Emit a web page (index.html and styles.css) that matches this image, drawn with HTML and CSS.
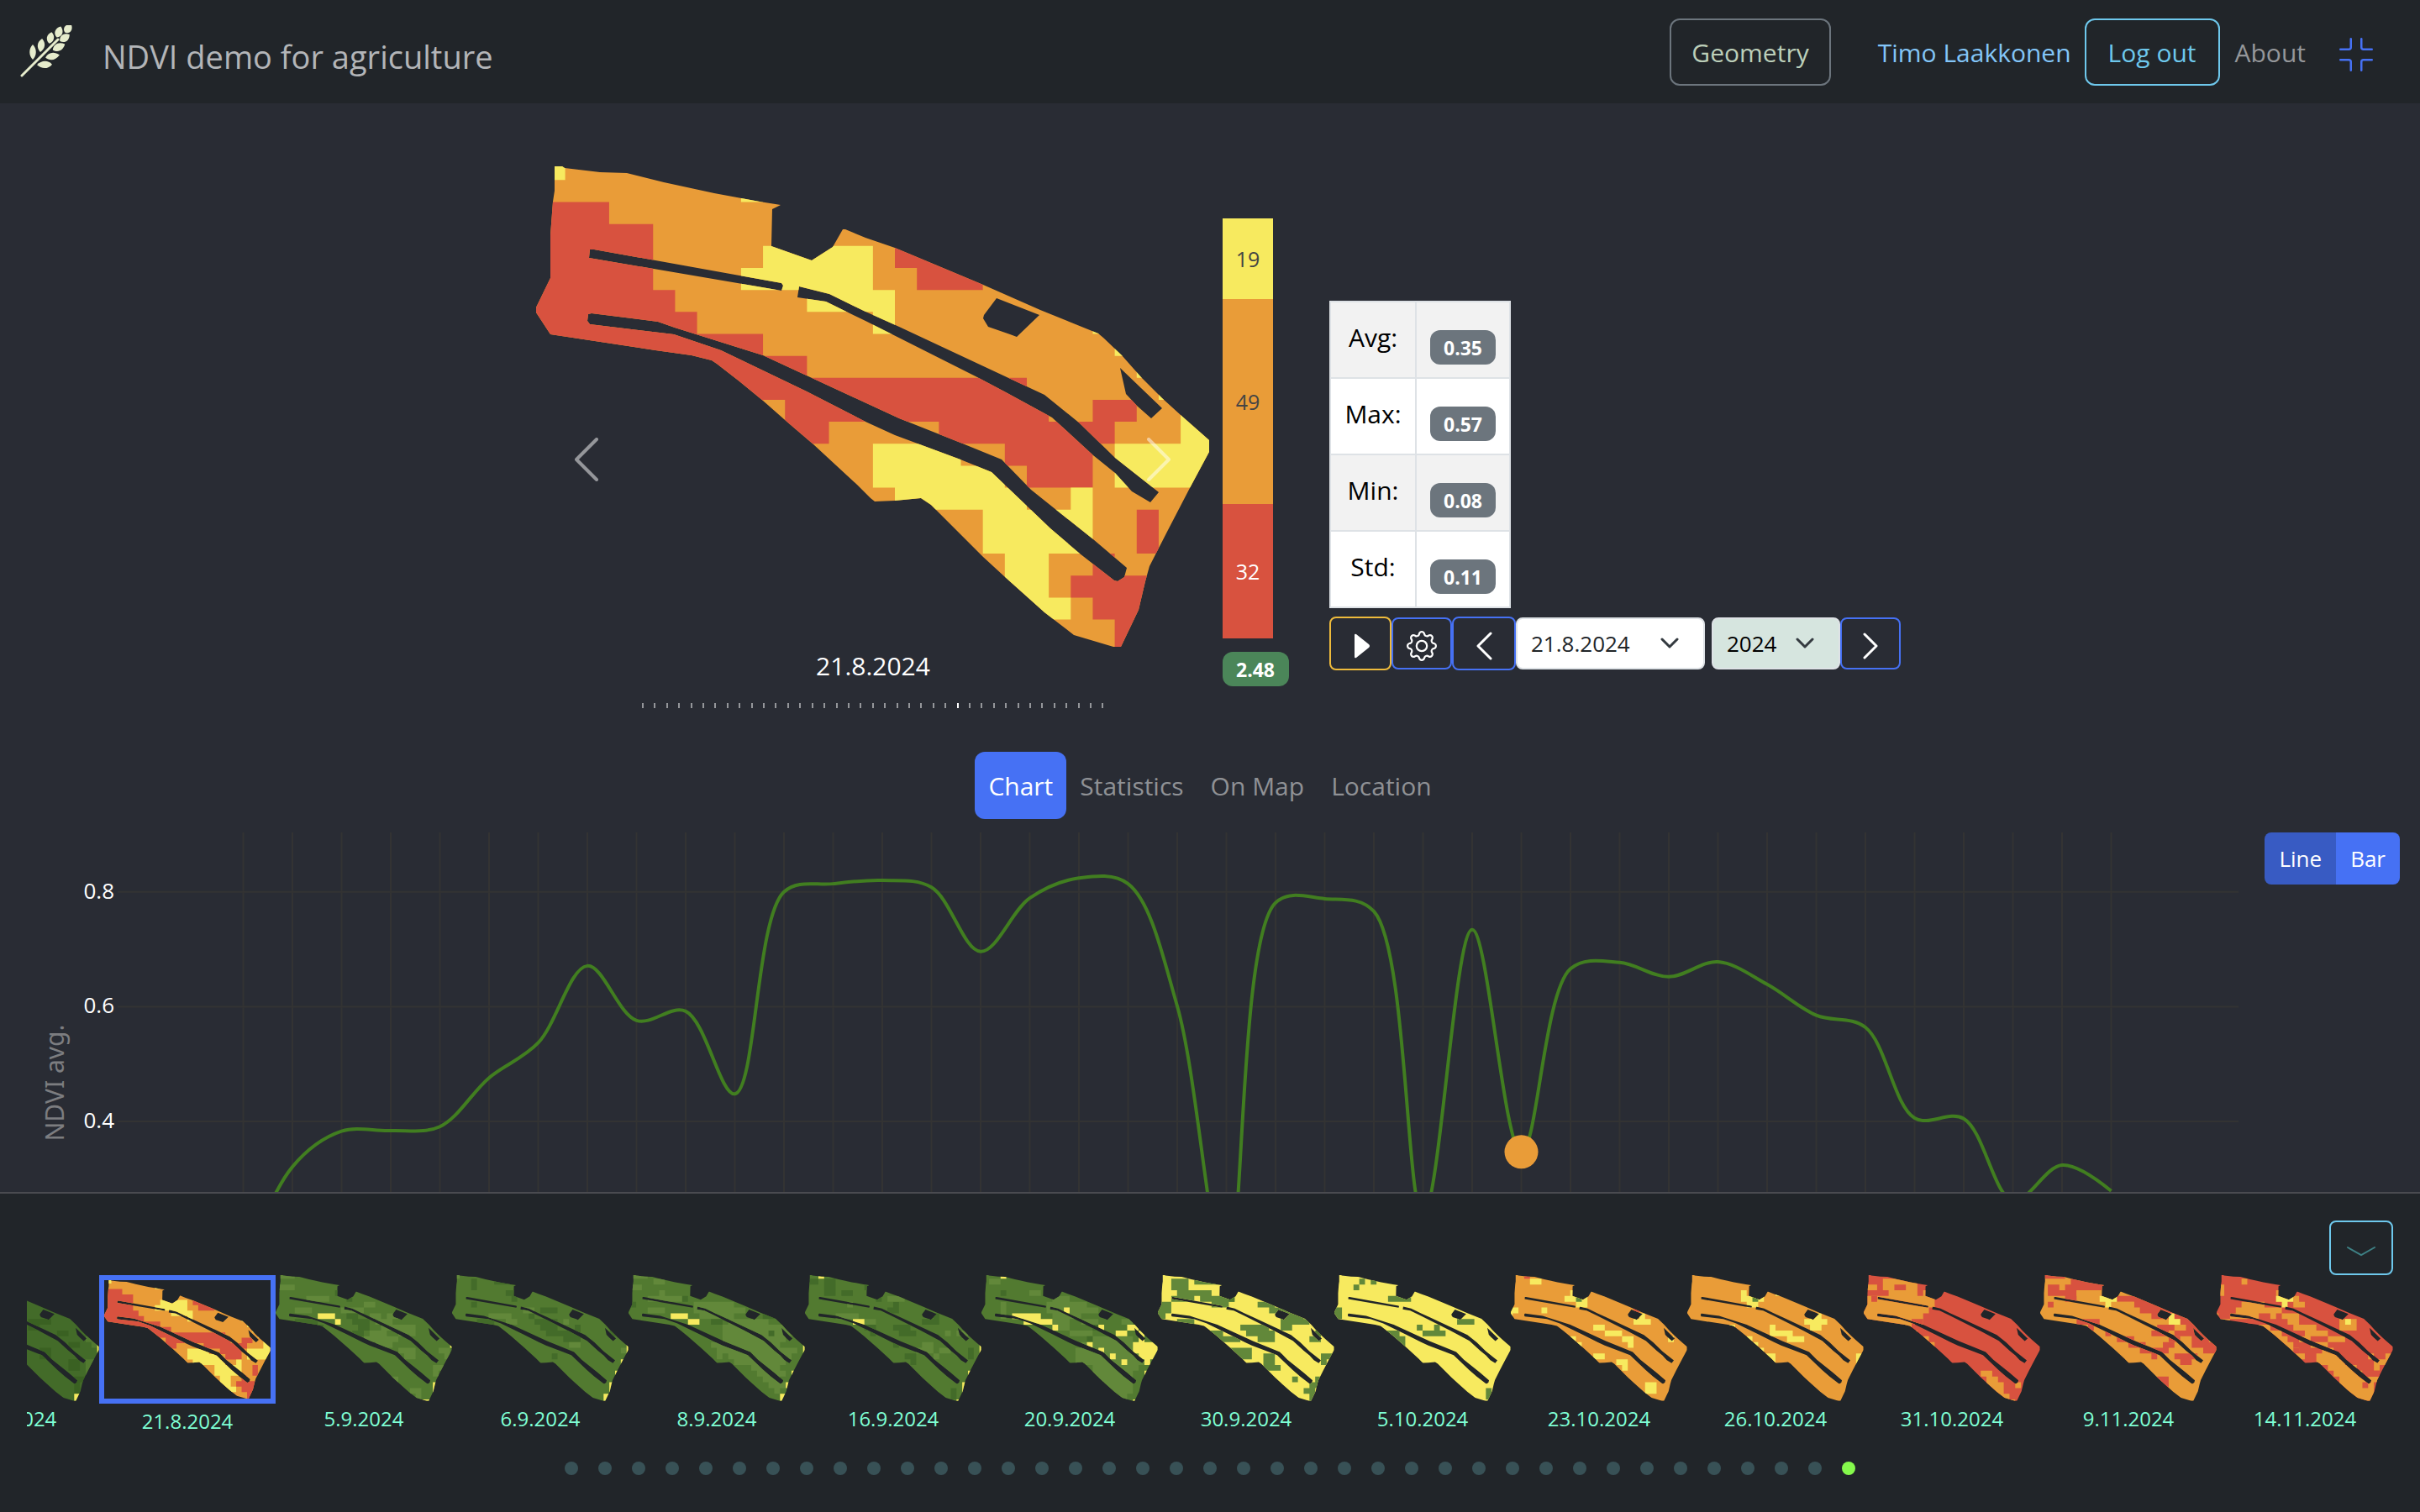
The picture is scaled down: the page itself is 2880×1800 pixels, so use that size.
FILE: index.html
```html
<!DOCTYPE html>
<html lang="en">
<head>
<meta charset="utf-8">
<title>NDVI demo for agriculture</title>
<meta name="viewport" content="width=device-width, initial-scale=1">
<link rel="stylesheet" href="styles.css">
</head>
<body>
<svg class="defs" aria-hidden="true">
  <defs>
    <!-- Outline of the field with the drains and holes left out -->
    <clipPath id="field-shape">
      <path clip-rule="evenodd" d="M660 198L669 198L672 200L714 205L746 206L790 217L850 230L904 240L929 244L919 249L918 293L966 310L991 294L1003 273L1006 273L1030 283L1065 295L1170 339L1238 369L1307 397L1313 402L1335 423L1358 449L1383 474L1405 494L1439 524L1439 538L1417 579L1390 631L1368 674L1363 692L1355 726L1334 770L1325 770L1278 756L1243 729L1195 686L1170 663L1108 601L1096 593L1065 596L1041 597L1036 593L1020 577L968 529L933 499L908 477L880 454L853 433L847 429L823 423L780 417L655 398L638 372L638 366L655 331L655 280L658 240L660 227Z
      M702 297L707 297L930 337L932 340L930 346L907 342L701 307Z
      M951 341L987 350L1030 371L1070 389L1243 470L1285 504L1327 545L1379 586L1369 598L1347 585L1327 563L1301 542L1252 497L1197 467L1163 449L1030 382L983 359L949 354Z
      M700 374L704 373L783 383L803 390L908 423L1070 498L1143 527L1192 547L1227 583L1301 642L1341 676L1338 687L1330 692L1326 691L1285 659L1250 629L1180 562L1143 547L1065 518L1030 502L960 466L858 417L802 398L702 386L699 382Z
      M1186 355L1237 375L1210 401L1202 398L1176 389L1170 379L1171 375Z
      M1333 438L1383 486L1370 498L1353 483L1340 469Z"/>
    </clipPath>
  </defs>
</svg>

<header class="topbar">
  <a class="brand" href="#">
    <svg class="brand-icon" viewBox="0 0 64 64" aria-hidden="true">
      <path d="M2 60L45 17" stroke="currentColor" stroke-width="3" stroke-linecap="round"/>
      <g fill="currentColor">
        <path transform="translate(15 32)" d="M0 -9C5 -4 5 4 0 9C-5 4 -5 -4 0 -9Z"/>
        <path transform="translate(25 24) rotate(8)" d="M0 -8C6 -3 5 4 0 8C-5 4 -6 -3 0 -8Z"/>
        <path transform="translate(36 15) rotate(12)" d="M0 -7C6 -3 5 4 0 7C-5 4 -6 -3 0 -7Z"/>
        <path transform="translate(46 8) rotate(20)" d="M0 -7C6 -3 6 4 0 7C-6 4 -6 -3 0 -7Z"/>
        <path transform="translate(57 4) rotate(40)" d="M0 -6C6 -3 6 4 0 6C-6 4 -6 -3 0 -6Z"/>
        <path transform="translate(53 15) rotate(55)" d="M0 -7C6 -3 6 4 0 7C-6 4 -6 -3 0 -7Z"/>
        <path transform="translate(46 26) rotate(65)" d="M0 -8C6 -3 6 4 0 8C-6 4 -6 -3 0 -8Z"/>
        <path transform="translate(38 37) rotate(80)" d="M0 -9C6 -3 5 4 0 8C-5 4 -6 -3 0 -9Z"/>
        <path transform="translate(29 47) rotate(88)" d="M0 -9C6 -4 5 4 0 9C-5 4 -6 -4 0 -9Z"/>
      </g>
    </svg>
    <span class="brand-name">NDVI demo for agriculture</span>
  </a>
  <nav class="topnav">
    <button class="btn btn-geometry" type="button">Geometry</button>
    <a class="user" href="#">Timo Laakkonen</a>
    <button class="btn btn-logout" type="button">Log out</button>
    <a class="about" href="#">About</a>
    <button class="btn-plain" type="button" aria-label="Exit full screen">
      <svg viewBox="0 0 16 16" width="40" height="40" fill="currentColor" aria-hidden="true"><path d="M5.500 0a.5.5 0 0 1 .5.5v4A1.500 1.500 0 0 1 4.500 6h-4a.5.5 0 0 1 0-1h4a.5.5 0 0 0 .5-.5v-4a.5.5 0 0 1 .5-.5m5 0a.5.5 0 0 1 .5.5v4a.5.5 0 0 0 .5.5h4a.5.5 0 0 1 0 1h-4A1.500 1.500 0 0 1 10 4.500v-4a.5.5 0 0 1 .5-.5M0 10.500a.5.5 0 0 1 .5-.5h4A1.500 1.500 0 0 1 6 11.500v4a.5.5 0 0 1-1 0v-4a.5.5 0 0 0-.5-.5h-4a.5.5 0 0 1-.5-.5m10 1a1.500 1.500 0 0 1 1.500-1.500h4a.5.5 0 0 1 0 1h-4a.5.5 0 0 0-.5.5v4a.5.5 0 0 1-1 0z"/></svg>
    </button>
  </nav>
</header>

<main class="content">
  <section class="overview">
    <div class="carousel">
      <svg class="field" id="field" viewBox="638 198 802 572" role="img" aria-label="NDVI map 21.8.2024"></svg>
      <button class="carousel-prev" type="button" aria-label="Previous">
        <svg viewBox="0 0 32 56" width="32" height="56" aria-hidden="true"><path d="M28 4L4 28L28 52"/></svg>
      </button>
      <button class="carousel-next" type="button" aria-label="Next">
        <svg viewBox="0 0 32 56" width="32" height="56" aria-hidden="true"><path d="M4 4L28 28L4 52"/></svg>
      </button>
      <p class="carousel-date">21.8.2024</p>
      <div class="ticks" id="ticks"></div>
    </div>

    <div class="shares">
      <div class="share-bar">
        <div class="share share-yellow">19</div>
        <div class="share share-orange">49</div>
        <div class="share share-red">32</div>
      </div>
      <span class="badge badge-green">2.48</span>
    </div>

    <div class="panel">
      <table class="stats">
        <tbody>
          <tr><th scope="row">Avg:</th><td><span class="badge">0.35</span></td></tr>
          <tr><th scope="row">Max:</th><td><span class="badge">0.57</span></td></tr>
          <tr><th scope="row">Min:</th><td><span class="badge">0.08</span></td></tr>
          <tr><th scope="row">Std:</th><td><span class="badge">0.11</span></td></tr>
        </tbody>
      </table>
      <div class="player">
        <button class="tool tool-play" type="button" aria-label="Play">
          <svg viewBox="0 0 20 32" width="20" height="32" aria-hidden="true"><path fill="currentColor" d="M1 3Q1 1 3 2L18 14Q20 16 18 18L3 30Q1 31 1 29Z"/></svg>
        </button>
        <button class="tool" type="button" aria-label="Settings">
          <svg viewBox="0 0 16 16" width="36" height="36" fill="currentColor" aria-hidden="true"><path d="M8 4.754a3.246 3.246 0 1 0 0 6.492 3.246 3.246 0 0 0 0-6.492M5.754 8a2.246 2.246 0 1 1 4.492 0 2.246 2.246 0 0 1-4.492 0"/><path d="M9.796 1.343c-.527-1.790-3.065-1.790-3.592 0l-.094.319a.873.873 0 0 1-1.255.52l-.292-.16c-1.640-.892-3.433.902-2.540 2.541l.159.292a.873.873 0 0 1-.52 1.255l-.319.094c-1.790.527-1.790 3.065 0 3.592l.319.094a.873.873 0 0 1 .52 1.255l-.16.292c-.892 1.640.901 3.434 2.541 2.540l.292-.159a.873.873 0 0 1 1.255.52l.094.319c.527 1.790 3.065 1.790 3.592 0l.094-.319a.873.873 0 0 1 1.255-.52l.292.16c1.640.893 3.434-.902 2.540-2.541l-.159-.292a.873.873 0 0 1 .52-1.255l.319-.094c1.790-.527 1.790-3.065 0-3.592l-.319-.094a.873.873 0 0 1-.52-1.255l.16-.292c.893-1.640-.902-3.433-2.541-2.540l-.292.159a.873.873 0 0 1-1.255-.52zm-2.633.283c.246-.835 1.428-.835 1.674 0l.094.319a1.873 1.873 0 0 0 2.693 1.115l.291-.16c.764-.415 1.600.42 1.184 1.185l-.159.292a1.873 1.873 0 0 0 1.116 2.692l.318.094c.835.246.835 1.428 0 1.674l-.319.094a1.873 1.873 0 0 0-1.115 2.693l.16.291c.415.764-.42 1.600-1.185 1.184l-.291-.159a1.873 1.873 0 0 0-2.693 1.116l-.094.318c-.246.835-1.428.835-1.674 0l-.094-.319a1.873 1.873 0 0 0-2.692-1.115l-.292.16c-.764.415-1.600-.42-1.184-1.185l.159-.291A1.873 1.873 0 0 0 1.945 8.930l-.319-.094c-.835-.246-.835-1.428 0-1.674l.319-.094A1.873 1.873 0 0 0 3.060 4.377l-.16-.292c-.415-.764.42-1.600 1.185-1.184l.292.159a1.873 1.873 0 0 0 2.692-1.115z"/></svg>
        </button>
        <button class="tool tool-prev" type="button" aria-label="Previous image">
          <svg viewBox="0 0 20 34" width="20" height="34" aria-hidden="true"><path class="stroke" d="M18 2L3 17L18 32"/></svg>
        </button>
        <span class="select select-date">
          <select aria-label="Date"><option>21.8.2024</option></select>
          <svg viewBox="0 0 24 16" width="24" height="16" aria-hidden="true"><path d="M3 3L12 12L21 3"/></svg>
        </span>
        <span class="select select-year">
          <select aria-label="Year"><option>2024</option></select>
          <svg viewBox="0 0 24 16" width="24" height="16" aria-hidden="true"><path d="M3 3L12 12L21 3"/></svg>
        </span>
        <button class="tool tool-next" type="button" aria-label="Next image">
          <svg viewBox="0 0 20 32" width="20" height="32" aria-hidden="true"><path class="stroke" d="M3 2L17 16L3 30"/></svg>
        </button>
      </div>
    </div>
  </section>

  <nav class="tabs">
    <a class="tab tab-active" href="#">Chart</a>
    <a class="tab" href="#">Statistics</a>
    <a class="tab" href="#">On Map</a>
    <a class="tab" href="#">Location</a>
  </nav>

  <section class="chart-area">
    <svg class="chart" id="chart" viewBox="0 0 2880 618" role="img" aria-label="NDVI average over the season"></svg>
    <div class="chart-switch">
      <button class="switch switch-on" type="button">Line</button><button class="switch" type="button">Bar</button>
    </div>
  </section>
</main>

<footer class="timeline">
  <button class="btn-collapse" type="button" aria-label="Hide images">
    <svg viewBox="0 0 36 14" width="36" height="14" aria-hidden="true"><path d="M2 2L18 11L34 2"/></svg>
  </button>
  <ul class="thumbs" id="thumbs"></ul>
  <div class="dots" id="dots"></div>
</footer>
<script src="app.js"></script>
</body>
</html>
```
FILE: styles.css
```css
* { box-sizing: border-box; }

:root {
  --panel: #212529;
  --page: #292c34;
  --blue: #4671f4;
  --yellow: #f7ea5f;
  --orange: #e99c38;
  --red: #d8523f;
  --sky: #6ec8ec;
}

body {
  margin: 0;
  height: 100vh;
  display: flex;
  flex-direction: column;
  background: var(--page);
  color: #fff;
  font-family: "Segoe UI", "Open Sans", "Noto Sans", sans-serif;
  font-size: 30px;
  line-height: 48px;
}

a { color: inherit; text-decoration: none; }
button, select { font: inherit; color: inherit; }
button { background: none; border: 0; padding: 0; cursor: pointer; }
svg { display: block; }
.defs { position: absolute; width: 0; height: 0; }

/* Header */
.topbar {
  display: flex;
  align-items: center;
  justify-content: space-between;
  flex: none;
  padding: 22px 56px 21px 24px;
  background: var(--panel);
}
.brand {
  display: flex;
  align-items: center;
  gap: 34px;
  color: #b3b5b8;
  font-size: 38px;
  padding-top: 8px;
}
.brand-icon { width: 64px; height: 64px; fill: none; color: #e6eccc; margin-bottom: 8px; }
.brand-name { padding-top: 2px; }
.topnav { display: flex; align-items: center; color: #95979a; }
.btn { height: 80px; border: 2px solid; border-radius: 12px; padding: 2px 24px 0; }
.btn-geometry { border-color: #6c757d; color: #bccfb9; }
.user, .about { padding-top: 2px; }
.user { margin: 0 16px 0 56px; color: #83c5f7; }
.btn-logout { padding: 2px 26px 0; border-color: var(--sky); color: var(--sky); }
.about { margin: 0 40px 0 18px; }
.btn-plain { color: var(--blue); padding-top: 6px; }

/* Map, shares and statistics */
.content { flex: 1; min-height: 0; overflow: hidden; }
.overview {
  display: flex;
  justify-content: center;
  align-items: flex-start;
  padding: 75px 0 0 20px;
}
.carousel { position: relative; width: 802px; margin-right: 15px; }
.field { width: 100%; height: auto; }
.carousel-prev, .carousel-next { position: absolute; top: 321px; opacity: .5; }
.carousel-prev { left: 44px; }
.carousel-next { right: 45px; }
.carousel svg path { stroke-linecap: round; }
.carousel button path { fill: none; stroke: #fff; stroke-width: 4; stroke-linejoin: round; }
.carousel-date { margin: 0; line-height: 46px; text-align: center; }
.ticks { display: flex; justify-content: space-between; width: 550px; margin: 21px auto 0; }
.tick { width: 2px; height: 6px; background: #94969a; }
.tick-active { background: #fff; }

.shares { width: 127px; margin-top: 62px; }
.share-bar { width: 60px; height: 500px; display: flex; flex-direction: column; font-size: 25px; }
.share { display: flex; align-items: center; justify-content: center; color: #444; }
.share-yellow { flex: 96; background: var(--yellow); }
.share-orange { flex: 244; background: var(--orange); }
.share-red { flex: 160; background: var(--red); color: #fff; }
.badge {
  display: inline-block;
  height: 41px;
  padding: 0 16px;
  border-radius: 12px;
  background: #6c757d;
  color: #fff;
  font-size: 23px;
  font-weight: 700;
  line-height: 43px;
}
.badge-green { display: block; width: 79px; margin-top: 16px; background: #4b8659; }

.panel { margin-top: 160px; }
.stats { border-collapse: collapse; background: #fff; color: #000; }
.stats tr { height: 91px; }
.stats tr:nth-child(odd) { background: #f2f2f2; }
.stats th, .stats td { border: 2px solid #dee2e6; padding: 16px 16px 0; vertical-align: top; text-align: center; }
.stats th { width: 102px; padding: 18px 0 0; font-weight: 400; }
.stats td { line-height: 0; width: 112px; }
.stats .badge { margin-top: 17px; }

.player { display: flex; align-items: center; margin-top: 10px; }
.tool {
  display: flex;
  align-items: center;
  justify-content: center;
  width: 72px;
  height: 62px;
  border: 2px solid var(--blue);
  border-radius: 8px;
  padding-top: 6px;
}
.tool-play { width: 74px; height: 64px; border-color: #eebb3c; padding-left: 4px; }
.tool-prev { width: 76px; height: 64px; }
.tool .stroke { fill: none; stroke: #fff; stroke-width: 3; stroke-linecap: round; stroke-linejoin: round; }
.select { position: relative; display: block; font-size: 26px; color: #212529; }
.select select {
  appearance: none;
  display: block;
  width: 100%;
  height: 62px;
  padding: 0 18px 0 16px;
  border: 2px solid #dee2e6;
  border-radius: 8px;
  background: #fff;
}
.select svg { position: absolute; right: 30px; top: 23px; pointer-events: none; }
.select path { fill: none; stroke: #343a40; stroke-width: 3; stroke-linecap: round; stroke-linejoin: round; }
.select-date { width: 225px; margin-right: 8px; }
.select-year { width: 153px; color: #000; }
.select-year select { background: #d6e5df; }

/* Tabs */
.tabs { display: flex; justify-content: center; margin-top: 52px; color: #8f9195; }
.tab { padding: 17px 16px 15px; border-radius: 12px; }
.tab-active { background: var(--blue); color: #fff; }

/* Chart */
.chart-area { position: relative; margin-top: 16px; }
.chart { width: 100%; height: auto; }
.chart .grid { stroke: #333; stroke-width: 2; }
.chart .line { fill: none; stroke: #417e20; stroke-width: 4; }
.chart .point { fill: var(--orange); }
.chart .label { fill: #fff; font-size: 26px; text-anchor: end; }
.chart .title { fill: #7c7d80; font: 30px "Noto Sans", sans-serif; text-anchor: middle; }
.chart-switch { position: absolute; top: 0; right: 24px; display: flex; }
.switch { height: 62px; padding: 0 17px; background: var(--blue); font-size: 26px; border-radius: 0 8px 8px 0; }
.switch-on { background: #385bc3; border-radius: 8px 0 0 8px; }

/* Timeline */
.timeline {
  flex: none;
  display: flex;
  flex-direction: column;
  border-top: 2px solid #4a4b50;
  background: var(--panel);
  padding: 32px 32px 44px;
}
.btn-collapse {
  align-self: flex-end;
  display: flex;
  align-items: center;
  justify-content: center;
  width: 76px;
  height: 65px;
  padding-top: 8px;
  border: 2px solid var(--sky);
  border-radius: 8px;
}
.btn-collapse path { fill: none; stroke: #3e8084; stroke-width: 2; stroke-linecap: round; }
.thumbs {
  display: flex;
  justify-content: flex-end;
  overflow: hidden;
  height: 206px;
  margin: 0;
  padding: 0;
  list-style: none;
}
.thumb { display: block; flex: none; width: 210px; font-size: 24px; line-height: 42px; color: #7fffd4; }
.thumb svg { width: 210px; height: auto; }
.thumb-active svg { border: 6px solid var(--blue); }
.dots { display: flex; justify-content: center; gap: 24px; margin-top: 16px; }
.dot { width: 16px; height: 16px; border-radius: 50%; background: #385156; }
.dot-active { background: #85f94c; }
```
FILE: app.js
```js
// Colour classes of the NDVI rasters
const COLORS = {
  r: '#d8523f', o: '#e99c38', y: '#f7ea5f',
  l: '#62883a', m: '#527a30', d: '#436b29', k: '#3a6122'
};

// Each raster: a base class and runs of cells as "row:first-last" per class,
// painted in the order in which they are listed.
const rasters = [
  { date: '16.8.2024', base: 'd', cells: [
    ['k', '6:24-26 8:19-22 9:19-20 10:24-25 12:26-27 13:21-22 14:21-22 15:26-27 16:26-27 18:27-28 19:27 20:27'],
    ['m', '11:29-31 12:30-31 15:29-30 16:29 17:29'], ['y', '12:31 13:31 21:27-28 22:27-28']] },
  { date: '21.8.2024', base: 'o', cells: [
    ['r', '2:0-3 3:0-5 4:0-5 5:0-5 6:0-6 7:0-7 8:0-10 9:0-12 10:0-22 11:0-10 11:12-23 12:12-13 12:19-26 13:22-25 14:23-25 16:28 17:28 18:26 19:25-31 20:26-31 21:27-31 22:27-31 4:17-19 5:18-20 11:26-27'],
    ['y', '0:1 1:10 4:11-15 5:10-15 6:13-16 7:16 7:26 8:27 9:28 10:29 11:30-31 12:30-31 13:16-19 13:27-31 14:16-21 14:27-31 15:17-22 15:25 16:21-25 17:21-25 18:22-23 19:22-23 20:22-24']] },
  { date: '5.9.2024', base: 'm', cells: [
    ['l', '0:1-3 2:1-3 4:6-9 5:16-17 6:12-15 6:4-6 7:17-18 7:20-21 8:18-20 9:19-24 10:17-19 10:22-24 11:16-21 12:18-20 13:22-24 13:29-30 14:23-24 14:30 16:28-29 17:28 18:20-21 20:24-25 21:25'],
    ['d', '3:11 7:13-14 8:14-16 8:4-7 9:15-16 9:7-8 10:14-15 4:13'],
    ['y', '7:8-10 8:11 12:31 17:30 19:28 20:28 22:26-27']] },
  { date: '6.9.2024', base: 'm', cells: [
    ['d', '1:4 2:4 1:8-11 3:10-11 4:11 5:4 6:16-18 7:14 8:15-18 9:16-18 10:17-22 11:20-22 8:5-7 10:28-29 9:22 14:18'],
    ['l', '7:7-10 6:13-14 8:10-11 8:20 12:21-22 13:30 0:1'],
    ['y', '12:31 13:31 15:30 17:29 19:28 20:28 21:27 22:27']] },
  { date: '8.9.2024', base: 'm', cells: [
    ['l', '0:1-3 1:5-6 2:1-2 3:6 4:4-9 5:12-18 6:12-20 6:4-6 7:13-18 8:18-24 9:17-28 10:17-29 11:17-27 12:15-26 13:16-29 14:18-28 15:19-27 16:22-26 17:23-27 18:24-26 19:25-27 20:26 14:16'],
    ['d', '5:1 4:10 7:24-25 8:15-16 10:25'],
    ['y', '7:8-10 8:11-12 12:31 13:31 17:29 19:28 21:27 22:27']] },
  { date: '16.9.2024', base: 'm', cells: [
    ['d', '1:4-5 2:4-5 3:4-5 3:7-8 1:1-2 2:11-12 4:13 5:16 6:15-16 8:21-23 7:23 9:16-18 10:17-19 9:11-12 10:12 12:16 14:18-19 15:19 13:29 14:29 20:26 21:26'],
    ['l', '4:15-17 5:8 7:6-9 8:11-12 10:27-28 10:25 12:21-22 13:20-22 13:24-25 14:23 19:28'],
    ['y', '0:3 8:9-10 12:31 13:31 17:29 19:28 20:28 22:27']] },
  { date: '20.9.2024', base: 'm', cells: [
    ['l', '1:2-3 3:9-10 4:13-15 5:12-18 6:12-20 5:4 6:4 7:4 7:13-17 8:13-15 9:14-15 8:18-20 10:16-19 11:20-26 12:18-26 13:17-27 14:17-28 15:17-28 16:20-27 17:20-26 18:21-26 19:22-26 20:23-26 21:24-25 8:25-26'],
    ['d', '3:4 6:23 11:19 9:20'],
    ['y', '0:4 6:15 7:6-10 8:8-12 9:13 9:21 9:26-27 10:24-25 10:28 11:28 12:27-31 13:27-31 14:28-31 15:29 12:19 13:21 14:23 15:25 17:29 22:27']] },
  { date: '30.9.2024', base: 'y', cells: [
    ['l', '1:3-5 2:3-5 1:7-11 3:4-9 4:3-6 5:1-2 6:0-2 7:0-1 4:8-13 5:10-12 5:18-20 6:20-24 7:22-25 8:22-26 9:22-23 8:4-6 9:15-19 10:16-20 11:18-20 10:9-11 11:11-14 13:12-16 14:14-16 14:19-20 15:19-20 16:19-21 18:24 11:27-28 14:29-30 15:29 18:28 19:27-28 20:26-27 21:27 22:27'],
    ['m', '4:13 10:28']] },
  { date: '5.10.2024', base: 'y', cells: [
    ['l', '1:5 1:7 2:4 4:10-13 6:0-1 7:0-1 8:22-24 9:15 9:18 10:16-19 10:9-11 11:11-12 12:12 20:27 21:27']] },
  { date: '23.10.2024', base: 'o', cells: [
    ['r', '0:3 6:22'],
    ['y', '1:4-5 3:11 4:10-13 5:12-13 6:0-1 6:6 7:0 7:23 8:22-24 9:15-16 10:17-19 11:20-21 12:21 11:11 12:12 14:15-16 15:19-20 16:20 19:24-25 20:24-25 11:28'], ['l', '4:12']] },
  { date: '26.10.2024', base: 'o', cells: [
    ['y', '3:10 4:10-13 5:11-12 3:16 7:22-23 8:21-24 9:22-23 9:15 10:15-18 11:18-20 9:8 11:11 12:12 13:13 14:14-15 15:15 14:30 15:30'], ['l', '4:12']] },
  { date: '31.10.2024', base: 'r', cells: [
    ['o', '1:4-9 2:1-2 2:4-9 3:5-11 4:0-12 5:0-12 6:0-11 7:0-10 8:0-10 9:0-8 10:9 11:10-11 12:12 17:21-22 18:22-23 19:22-24 20:23-24 21:24-25 22:25-26 19:27'],
    ['r', '2:6-7 8:9-10 3:10 4:2']] },
  { date: '9.11.2024', base: 'o', cells: [
    ['r', '0:1-4 1:6-11 2:2-3 2:5-11 3:2-6 4:5-6 5:2 4:14-19 5:17-24 6:18-23 7:20-27 8:25-27 8:7-10 9:21-28 9:9 10:12 10:20-22 10:24-30 11:27-29 11:14-16 12:27-31 12:16-18 13:29-31 13:18-21 12:22-23 13:22 14:24-27 15:25-26 14:20 18:21-22 19:22'],
    ['o', '5:14-16 3:7-10 9:24-25'],
    ['y', '4:11-13 5:12 7:23 8:23-24'], ['r', '11:23-24']] },
  { date: '14.11.2024', base: 'r', cells: [
    ['o', '1:5 2:0-1 3:0-1 3:11 4:0 4:11 5:5-8 6:4-7 6:8-11 7:0 7:3-7 7:10 7:12-14 8:0-2 8:13-14 8:22-24 9:22-24 5:14-15 4:14 9:14-17 10:16-19 9:8-9 10:8-11 11:9-12 12:11-13 13:12-14 14:14-15 11:15-16 11:20-22 12:17-19 13:19-20 14:18-21 14:27 14:30 15:18-22 15:28-30 16:20-24 16:28 17:21-25 18:22-29 19:22-27 20:23-27 21:24-27 22:25-28'],
    ['r', '8:6 17:26-28 13:14 19:26'],
    ['y', '4:11-13 5:12 8:23']] }
];

const CELL = 26.16, LEFT = 620.3, TOP = 188.2;

function runs(list) {
  return list.split(' ').map(run => {
    const [row, span] = run.split(':');
    const [a, b = a] = span.split('-').map(Number);
    return `M${a} ${row}h${b - a + 1}v1h${a - b - 1}z`;
  }).join('');
}

function drawRaster(raster) {
  return `<g clip-path="url(#field-shape)"><g transform="translate(${LEFT} ${TOP}) scale(${CELL})">` +
    `<rect width="32" height="23" fill="${COLORS[raster.base]}"/>` +
    raster.cells.map(([c, list]) => `<path fill="${COLORS[c]}" d="${runs(list)}"/>`).join('') +
    '</g></g>';
}

document.getElementById('field').innerHTML = drawRaster(rasters[1]);

document.getElementById('thumbs').innerHTML = rasters.map((raster, i) =>
  `<li><button type="button" class="thumb${i === 1 ? ' thumb-active' : ''}">` +
  `<svg viewBox="638 198 802 572" aria-hidden="true">${drawRaster(raster)}</svg>${raster.date}</button></li>`
).join('');

// NDVI averages of the season
const values = [.144, .321, .383, .384, .391, .476, .537, .671, .576, .592, .448, .8, .814,
  .82, .808, .696, .789, .824, .814, .601, .137, .781, .788, .766, .238, .734, .347, .666,
  .677, .652, .678, .639, .585, .564, .406, .405, .262, .324, .279];
const ACTIVE = 26;

const marks = (name, active) => values.map((_, i) =>
  `<span class="${name}${i === active ? ` ${name}-active` : ''}"></span>`).join('');
document.getElementById('ticks').innerHTML = marks('tick', ACTIVE);
document.getElementById('dots').innerHTML = marks('dot', values.length - 1);

const x = i => 289.5 + 58.5 * i;
const y = v => 617.5 - 683.5 * v;
const points = values.map((v, i) => ({ x: x(i), y: y(v) }));

// Centripetal Catmull-Rom spline; the first and last segments are quadratic
const handles = points.map((p, i) => {
  const a = points[i - 1], b = points[i + 1];
  if (!a || !b) return null;
  const da = Math.sqrt(Math.hypot(p.x - a.x, p.y - a.y));
  const db = Math.sqrt(Math.hypot(b.x - p.x, b.y - p.y));
  const slope = k => (p[k] - a[k]) / da - (b[k] - a[k]) / (da + db) + (b[k] - p[k]) / db;
  const mx = slope('x') / 3, my = slope('y') / 3;
  return { into: `${p.x - mx * da} ${p.y - my * da}`, out: `${p.x + mx * db} ${p.y + my * db}` };
});
const line = points.map((p, i) => {
  const from = handles[i - 1], to = handles[i];
  if (i === 0) return `M${p.x} ${p.y}`;
  if (!from) return `Q${to.into} ${p.x} ${p.y}`;
  if (!to) return `Q${from.out} ${p.x} ${p.y}`;
  return `C${from.out} ${to.into} ${p.x} ${p.y}`;
}).join('');

document.getElementById('chart').innerHTML =
  `<path class="grid" d="${points.map(p => `M${p.x} 0V618`).join('')}"/>` +
  [.8, .6, .4].map(v => `<path class="grid" d="M140 ${y(v)}H2664"/>` +
    `<text class="label" x="136" y="${y(v) + 8}">${v.toFixed(1)}</text>`).join('') +
  '<text class="title" transform="translate(76 298) rotate(-90)">NDVI avg.</text>' +
  `<path class="line" d="${line}"/>` +
  `<circle class="point" cx="${points[ACTIVE].x}" cy="${points[ACTIVE].y}" r="20"/>`;
```
